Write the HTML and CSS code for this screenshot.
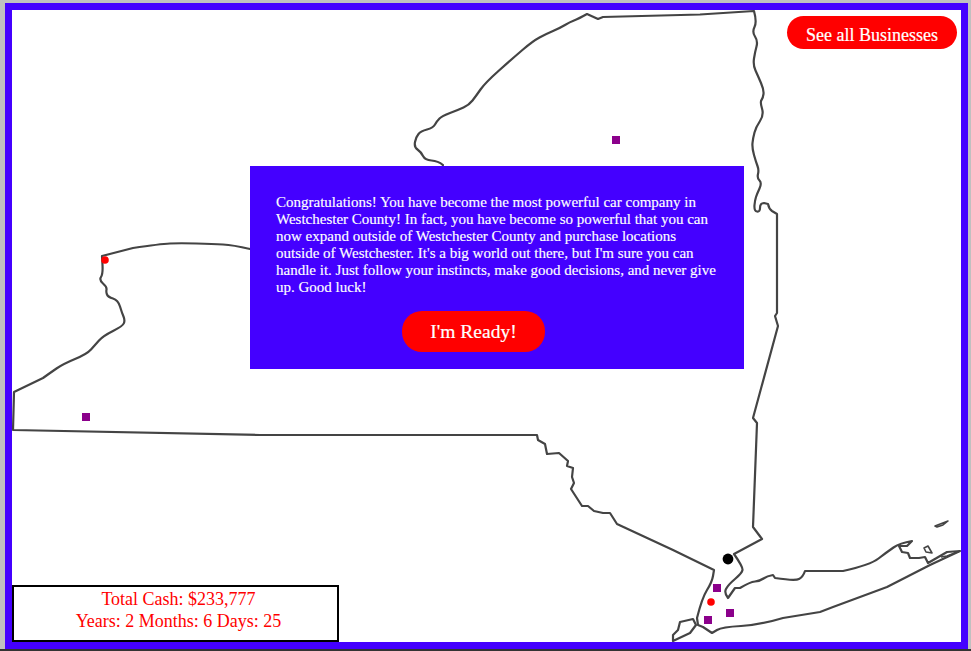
FILE: index.html
```html
<!DOCTYPE html>
<html lang="en">
  <head>
    <meta charset="UTF-8" />
    <meta name="viewport" content="width=device-width, initial-scale=1.0" />
    <title>Car Company</title>
    <link rel="stylesheet" href="styles.css">
  </head>
  <body>
    <div class="game-board">
      <svg class="state-map" width="949" height="632" viewBox="12 10 949 632">
        <g class="outlines">
          <path d="M102 256 L133 248 Q160 244 170 243.5 Q180 243 196.5 243.5 Q213 244 223 244.5 Q233 245 250 249 L440 175 L443 165 Q438 161 431.5 160.5 Q425 160 423 156 Q421 152 417.5 149.5 Q414 147 415 142 Q416 137 418.5 134 Q421 131 427 129.5 Q433 128 435 124.5 Q437 121 439.5 118.5 Q442 116 450 113 Q458 110 463.5 107.5 Q469 105 472.5 100.5 Q476 96 480.5 89.5 Q485 83 499 70.5 Q513 58 523 49.5 Q533 41 539.5 37.5 Q546 34 553 31 Q560 28 565 25 Q570 22 574 20.5 Q578 19 587 14 L598 19 L603 17 L700 14.5 L754 11 Q757 22 754.5 27 Q752 32 755 36.5 Q758 41 756.5 46.5 Q755 52 754 58.5 Q753 65 755.5 70.5 Q758 76 761 83 Q764 90 763.5 94 Q763 98 761.5 100 Q760 102 762 108.5 Q764 115 760 121 Q756 127 754.5 132.5 Q753 138 752.5 143 Q752 148 754 155 Q756 162 757.5 166 Q759 170 758 174 Q757 178 759.5 180.5 Q762 183 759.5 188.5 Q757 194 756 197 Q755 200 754.5 205 Q754 211 757 211.5 Q760 212 760 208 Q760 203 764 203 L768 204 Q769 209 772 211 L777 214 L777 313 L775 316 L778 326 L753 418 L757 423 L753 527 L762 539 L734 554 Q743 567 742.5 570 Q742 573 735 579 Q728 585 726 589 Q724 593 728 598 L735 588 L740 588 Q750 582 755 581.5 Q760 581 763.5 578.5 Q767 576 773 575 L775 578 Q795 581 799 579 Q803 577 805 571 L843 571 Q870 565 878.5 558.5 Q887 552 893.5 547.5 Q900 543 912 541 L907 546 L899 546 L902 552 L908 553 L910 558 L919 558 L925 557 L928 563 L947 552 L960 551 L930 565 L887 587 L833 607 L820 612 L783 618 Q760 625 741 626 Q722 627 717 630 L712 633 L703 627 L698 625 L697 618 Q702 598 707 590 Q712 582 713 576 L714 570 L673 550 L617 524 L610 513 L603 513 L594 511 L588 506 L582 506 L571 489 L574 483 L572 477 L573 468 L567 466 L568 461 L559 453 L547 454 L545 444 L538 440 L537 435 L260 435 L13 430 L14 392 L43 378 Q50 373 56.5 368.5 Q63 364 75 359 Q87 354 91 349.5 Q95 345 99 340.5 Q103 336 113 331 Q123 326 124 323 Q125 320 123.5 316.5 Q122 313 120 306.5 Q118 300 113 298.5 Q108 297 107 294.5 Q106 292 106.5 289.5 Q107 287 103 283.5 Q99 280 101 277 Q103 274 102.5 265 L102 256 Z" />
          <path d="M680 622 L693 619 L696 625 L690 633 L673 641 L673 635 L678 630 Z" />
          <path class="thin" d="M935 526 L948 521 L943 525 L937 527 Z" />
          <path class="thin" d="M924 548 L928 546 L932 553 L926 552 Z" />
          <path class="thin" d="M947 556 L960 551 M947 556 L941 557" />
        </g>
        <rect class="location" x="82" y="413" width="8" height="8" />
        <rect class="location" x="612" y="136" width="8" height="8" />
        <rect class="location" x="713" y="584" width="8" height="8" />
        <rect class="location" x="726" y="609" width="8" height="8" />
        <rect class="location" x="704" y="616" width="8" height="8" />
        <circle class="owned" cx="105" cy="260" r="3.8" />
        <circle class="owned" cx="711" cy="602" r="3.8" />
        <circle class="home" cx="728" cy="559" r="5.4" />
      </svg>

      <button class="btn all-btn">See all Businesses</button>

      <div class="message">
        <p>Congratulations! You have become the most powerful car company in Westchester County! In fact, you have become so powerful that you can now expand outside of Westchester County and purchase locations outside of Westchester. It's a big world out there, but I'm sure you can handle it. Just follow your instincts, make good decisions, and never give up. Good luck!</p>
        <button class="btn ready-btn">I'm Ready!</button>
      </div>

      <div class="status">
        <div>Total Cash: $233,777</div>
        <div>Years: 2 Months: 6 Days: 25</div>
      </div>
    </div>
  </body>
</html>
```

FILE: styles.css
```css
* {
  margin: 0;
  padding: 0;
  box-sizing: border-box;
}

html {
  background: #333333;
}

body {
  font-family: "Liberation Serif", serif;
  background: #c0c0c0;
  height: 649px;
  padding: 3px 3px 0 5px;
}

.game-board {
  position: relative;
  height: 646px;
  background: white;
  border: 7px solid #4400ff;
  overflow: hidden;
}

.state-map {
  display: block;
}

.outlines {
  fill: none;
  stroke: #444444;
  stroke-width: 2.2;
  stroke-linejoin: round;
  filter: blur(0.35px);
}

.thin {
  stroke-width: 1.6;
}

.location {
  fill: #8b008b;
}

.owned {
  fill: red;
}

.home {
  fill: black;
}

.btn {
  display: block;
  font-family: "Liberation Serif", serif;
  background: red;
  color: white;
  border: none;
  -webkit-text-stroke: 0.2px white;
}

.all-btn {
  position: absolute;
  top: 6px;
  right: 4px;
  width: 170px;
  height: 33px;
  border-radius: 17px;
  padding-top: 5px;
  font-size: 18px;
}

.message {
  position: absolute;
  top: 156px;
  left: 238px;
  width: 494px;
  height: 203px;
  background: #4400ff;
  color: white;
  padding: 28px 26px 0;
  font-size: 15px;
  line-height: 17px;
  -webkit-text-stroke: 0.15px white;
}

.ready-btn {
  width: 143px;
  height: 41px;
  margin: 15px 0 0 126px;
  border-radius: 20px;
  font-size: 19.5px;
}

.status {
  position: absolute;
  left: 0;
  bottom: 0;
  width: 327px;
  height: 57px;
  background: white;
  border: 2px solid black;
  color: red;
  text-align: center;
  font-size: 18px;
  line-height: 22px;
  padding: 1px 0 0 6px;
}
```
